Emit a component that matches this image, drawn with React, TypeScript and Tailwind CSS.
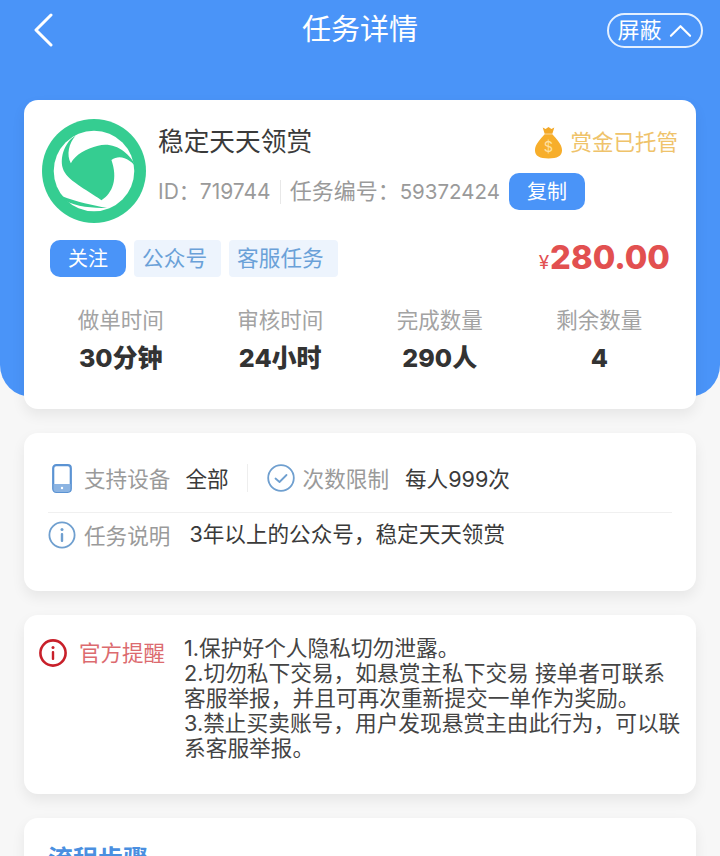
import type { ReactNode } from "react";

function Logo() {
  return (
    <svg viewBox="38 28 310 310" className="h-[104px] w-[104px] shrink-0">
      <circle cx="193" cy="183" r="155" fill="#35cd91" />
      <circle cx="193" cy="183" r="120" fill="#fff" />
      {/* centre blade */}
      <path
        d="M138 78 C108 95 90 140 100 175 C110 210 170 238 215 270 C250 248 264 205 245 150 C272 130 305 150 321 176 C300 125 250 95 205 108 C170 116 138 134 124 160 C110 135 118 100 138 78 Z"
        fill="#35cd91"
      />
      <path d="M105 270 C140 290 190 293 232 293 C190 285 140 275 98 258 Z" fill="#35cd91" />
    </svg>
  );
}

function MoneyBag() {
  return (
    <svg viewBox="0 0 30 34" className="h-[33px] w-[29px] shrink-0">
      <path d="M9 1.5 L12 3 L15 1 L18 3 L21 1.5 L19 8 H11 Z" fill="#f3a928" />
      <path
        d="M11 8.5 H19 C23 13 29 19 29 25 C29 31 24 33.5 15 33.5 C6 33.5 1 31 1 25 C1 19 7 13 11 8.5 Z"
        fill="#f7ae2b"
      />
      <text x="15" y="27" textAnchor="middle" fontSize="15" fontFamily="Inter, sans-serif" fill="#ffe1a0">
        $
      </text>
    </svg>
  );
}

function PhoneIcon() {
  return (
    <svg viewBox="0 0 20 29" className="h-[29px] w-[20px] shrink-0" fill="none">
      <rect x="1.2" y="1.2" width="17.6" height="26.6" rx="3" stroke="#5b93d3" strokeWidth="2.2" />
      <path d="M1.5 20 H18.5 V25 a3 3 0 0 1 -3 3 H4.5 a3 3 0 0 1 -3 -3 Z" fill="#8cb4e2" />
      <circle cx="10" cy="24" r="1.2" fill="#fff" />
    </svg>
  );
}

function CheckIcon() {
  return (
    <svg viewBox="0 0 28 28" className="h-[28px] w-[28px] shrink-0" fill="none">
      <circle cx="14" cy="14" r="12.8" stroke="#6f9fcf" strokeWidth="1.8" />
      <path d="M8.5 14.5 L12.5 18 L19.5 11" stroke="#6f9fcf" strokeWidth="1.8" strokeLinecap="round" strokeLinejoin="round" />
    </svg>
  );
}

function InfoIcon({ color, width }: { color: string; width: number }) {
  return (
    <svg viewBox="0 0 28 28" className="h-[28px] w-[28px] shrink-0" fill="none">
      <circle cx="14" cy="14" r="12.6" stroke={color} strokeWidth={width} />
      <circle cx="14" cy="8.5" r="1.5" fill={color} />
      <rect x="12.8" y="12" width="2.4" height="9" rx="1" fill={color} />
    </svg>
  );
}

function Tag({ className, children }: { className: string; children: ReactNode }) {
  return <span className={`flex h-[37px] items-center rounded-[4px] bg-[#edf4fd] text-[21.7px] text-[#6aa1d8] ${className}`}>{children}</span>;
}

const stats = [
  { label: "做单时间", value: "30分钟" },
  { label: "审核时间", value: "24小时" },
  { label: "完成数量", value: "290人" },
  { label: "剩余数量", value: "4" },
];

const cardClass = "mx-6 rounded-[14px] bg-white shadow-[0_6px_14px_rgba(0,0,0,0.07)]";

export default function App() {
  return (
    <div
      className="h-[856px] overflow-hidden bg-[#f7f7f7] text-[#3a3a3a]"
      style={{ fontFamily: '"Inter", "Noto Sans CJK SC", sans-serif' }}
    >
      <header className="flex h-[397px] items-start justify-between rounded-b-[32px] bg-[#4a94f8] pl-[33px] pr-[17px] pt-[13px] text-white">
        <div className="w-[96px]">
          <svg viewBox="0 0 20 34" className="h-[34px] w-[20px]" fill="none">
            <path d="M18 2 L3 17 L18 32" stroke="#fff" strokeWidth="3" strokeLinecap="round" strokeLinejoin="round" />
          </svg>
        </div>
        <h1 className="-translate-x-[8px] text-[29px] leading-[34px]">任务详情</h1>
        <div className="flex h-[35px] w-[96px] items-center justify-center gap-[8px] rounded-full border-2 border-[#e4f0ff] text-[22px]">
          屏蔽
          <svg viewBox="0 0 24 14" className="h-[14px] w-[23px]" fill="none">
            <path d="M2 12 L12 2 L22 12" stroke="#fff" strokeWidth="2.2" strokeLinecap="round" strokeLinejoin="round" />
          </svg>
        </div>
      </header>

      <div className="-mt-[297px] flex flex-col gap-6">
        <section className={`${cardClass} h-[309px] px-[18px] pt-[19px]`}>
          <div className="flex">
            <Logo />
            <div className="ml-3 min-w-0 flex-1">
              <div className="flex items-center justify-between pt-[5px]">
                <h2 className="text-[25.7px] leading-[36px]">稳定天天领赏</h2>
                <div className="flex items-center gap-[7px] text-[#efc36b]">
                  <MoneyBag />
                  <span className="text-[21.5px]">赏金已托管</span>
                </div>
              </div>
              <div className="mt-[13px] flex items-center text-[21px] text-[#9a9a9a]">
                <span>ID：719744</span>
                <span className="mx-[9px] h-[24px] w-px bg-[#e8e8e8]" />
                <span className="text-[22px]">
                  任务编号：<span className="text-[20.5px]">59372424</span>
                </span>
                <span className="ml-[9px] flex h-[37px] w-[76px] items-center justify-center rounded-[10px] bg-[#4a94f8] text-[20px] text-white">
                  复制
                </span>
              </div>
            </div>
          </div>

          <div className="mt-[16px] flex items-center pl-2">
            <span className="flex h-[37px] w-[76px] items-center justify-center rounded-[10px] bg-[#4a94f8] text-[20px] text-white">
              关注
            </span>
            <Tag className="ml-2 w-[87px] pl-2">公众号</Tag>
            <Tag className="ml-2 w-[109px] pl-2">客服任务</Tag>
            <span className="ml-auto mr-[8px] flex -translate-y-px items-baseline font-extrabold text-[#e25050]">
              <span className="mr-px text-[19px] font-normal">¥</span>
              <span className="text-[32.7px] leading-[38px]">280.00</span>
            </span>
          </div>

          <div className="mt-[26px] -ml-px grid w-[638px] grid-cols-4">
            {stats.map((s) => (
              <div key={s.label} className="flex flex-col items-center">
                <span className="text-[21.5px] leading-[30px] text-[#a3a3a3]">{s.label}</span>
                <span className="mt-[8px] text-[25px] font-extrabold leading-[30px] text-[#333]">{s.value}</span>
              </div>
            ))}
          </div>
        </section>

        <section className={`${cardClass} h-[158px] px-6 pt-[31px]`}>
          <div className="flex h-[49px] items-start border-b border-[#f0f0f0]">
            <span className="ml-1">
              <PhoneIcon />
            </span>
            <span className="ml-[12px] text-[21.6px] leading-[30px] text-[#9a9a9a]">支持设备</span>
            <span className="ml-[15px] text-[21.6px] leading-[30px]">全部</span>
            <span className="ml-[18px] h-[28px] w-px bg-[#eeeeee]" />
            <span className="ml-[19px]">
              <CheckIcon />
            </span>
            <span className="ml-[8px] text-[21.6px] leading-[30px] text-[#9a9a9a]">次数限制</span>
            <span className="ml-[16px] text-[21.6px] leading-[30px]">每人999次</span>
          </div>
          <div className="mt-[8px] flex items-start">
            <InfoIcon color="#6f9fcf" width={1.8} />
            <span className="ml-[8px] text-[21.6px] leading-[30px] text-[#9a9a9a]">任务说明</span>
            <span className="ml-[19px] text-[21.6px] leading-[26px]">3年以上的公众号，稳定天天领赏</span>
          </div>
        </section>

        <section className={`${cardClass} flex h-[179px] pl-[15px] pt-[24px]`}>
          <InfoIcon color="#c8202a" width={2.6} />
          <span className="ml-[12px] shrink-0 text-[21.5px] leading-[28px] text-[#dc6b6f]">官方提醒</span>
          <p className="-mt-[3px] ml-[19px] w-[500px] text-[21.7px] leading-[25px] text-[#444]">
            1.保护好个人隐私切勿泄露。
            <br />
            2.切勿私下交易，如悬赏主私下交易 接单者可联系客服举报，并且可再次重新提交一单作为奖励。
            <br />
            3.禁止买卖账号，用户发现悬赏主由此行为，可以联系客服举报。
          </p>
        </section>

        <section className={`${cardClass} h-[200px] px-6 pt-[26px]`}>
          <h3 className="text-[25px] font-bold leading-[30px] text-[#4a8fe0]">流程步骤</h3>
        </section>
      </div>
    </div>
  );
}
